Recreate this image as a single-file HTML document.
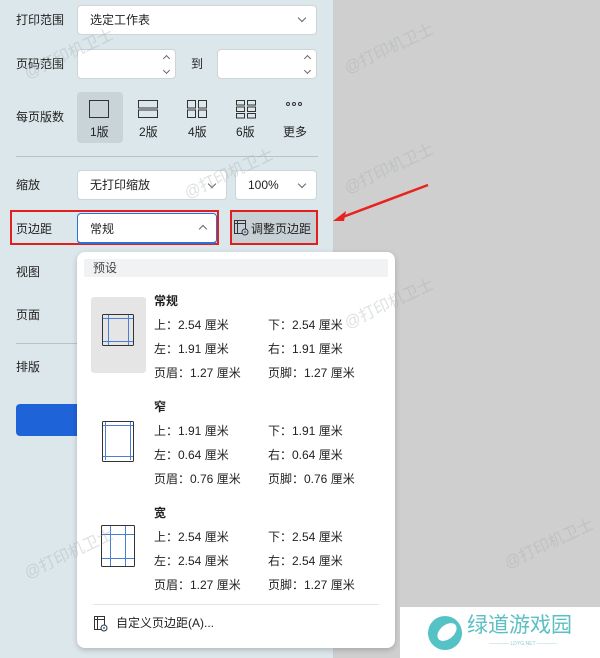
<!DOCTYPE html>
<html><head><meta charset="utf-8"><style>
*{margin:0;padding:0;box-sizing:border-box}
html,body{width:600px;height:658px;overflow:hidden}
body{position:relative;background:#cfcfcf;font-family:"Liberation Sans","Noto Sans CJK SC",sans-serif;font-size:12px;color:#222}
.a{position:absolute}
#panel{left:0;top:0;width:334px;height:658px;background:#dce7eb;border-right:1px solid #c6cfd3}
.box{position:absolute;background:#fff;border:1px solid #cdd5d9;border-radius:4px}
.lbl{position:absolute;font-size:12px;line-height:14px;white-space:nowrap}
.chev{position:absolute;width:6px;height:6px;border-right:1px solid #666;border-bottom:1px solid #666;transform:rotate(45deg)}
.up{transform:rotate(-135deg)}
.sm{width:5px;height:5px}
.dd{left:77px;top:252px;width:318px;height:396px;background:#fff;border-radius:8px;box-shadow:0 2px 6px rgba(0,0,0,.2)}
.t{font-size:12px;line-height:14px;position:absolute;white-space:nowrap;color:#222}
.b{font-weight:bold}
.wm{position:absolute;color:rgba(160,170,175,.35);font-size:16px;transform:rotate(-25deg);white-space:nowrap}
</style></head><body>
<div id="panel" class="a"></div>

<div class="lbl" style="left:16px;top:13px">打印范围</div>
<div class="box" style="left:77px;top:5px;width:240px;height:30px"></div>
<div class="lbl" style="left:90px;top:13px">选定工作表</div>
<div class="chev" style="left:299px;top:15px"></div>

<div class="lbl" style="left:16px;top:57px">页码范围</div>
<div class="box" style="left:77px;top:49px;width:99px;height:30px"></div>
<div class="chev up sm" style="left:164px;top:56px"></div>
<div class="chev sm" style="left:164px;top:68px"></div>
<div class="lbl" style="left:191px;top:57px">到</div>
<div class="box" style="left:217px;top:49px;width:100px;height:30px"></div>
<div class="chev up sm" style="left:305px;top:56px"></div>
<div class="chev sm" style="left:305px;top:68px"></div>

<div class="lbl" style="left:16px;top:110px">每页版数</div>
<div class="a" style="left:77px;top:92px;width:46px;height:51px;background:#c9d4d9;border-radius:4px"></div>
<svg class="a" style="left:77px;top:92px" width="250" height="30" fill="none" stroke="#333" stroke-width="1">
<rect x="12.5" y="8.5" width="19" height="17"/>
<rect x="61.5" y="8.5" width="19" height="7.5"/><rect x="61.5" y="18" width="19" height="7.5"/>
<rect x="110.5" y="8.5" width="8" height="7.5"/><rect x="121.5" y="8.5" width="8" height="7.5"/><rect x="110.5" y="18" width="8" height="7.5"/><rect x="121.5" y="18" width="8" height="7.5"/>
<rect x="159.5" y="8.5" width="8" height="4.5"/><rect x="170.5" y="8.5" width="8" height="4.5"/><rect x="159.5" y="15" width="8" height="4.5"/><rect x="170.5" y="15" width="8" height="4.5"/><rect x="159.5" y="21.5" width="8" height="4.5"/><rect x="170.5" y="21.5" width="8" height="4.5"/>
<circle cx="211" cy="12" r="1.5"/><circle cx="217" cy="12" r="1.5"/><circle cx="223" cy="12" r="1.5"/>
</svg>
<div class="lbl" style="left:90px;top:125px">1版</div>
<div class="lbl" style="left:139px;top:125px">2版</div>
<div class="lbl" style="left:188px;top:125px">4版</div>
<div class="lbl" style="left:236px;top:125px">6版</div>
<div class="lbl" style="left:283px;top:125px">更多</div>

<div class="a" style="left:16px;top:156px;width:302px;height:1px;background:#b9c3c7"></div>

<div class="lbl" style="left:16px;top:178px">缩放</div>
<div class="box" style="left:77px;top:170px;width:150px;height:30px"></div>
<div class="lbl" style="left:90px;top:178px">无打印缩放</div>
<div class="chev" style="left:209px;top:181px"></div>
<div class="box" style="left:235px;top:170px;width:82px;height:30px"></div>
<div class="lbl" style="left:248px;top:178px">100%</div>
<div class="chev" style="left:299px;top:181px"></div>

<div class="a" style="left:10px;top:210px;width:209px;height:35px;border:2px solid #e0201c"></div>
<div class="lbl" style="left:16px;top:222px">页边距</div>
<div class="box" style="left:77px;top:213px;width:140px;height:31px;border-color:#2f6fd8;border-bottom-width:2px"></div>
<div class="lbl" style="left:90px;top:222px">常规</div>
<div class="chev up" style="left:200px;top:226px"></div>
<div class="a" style="left:230px;top:210px;width:88px;height:35px;background:#c7d0d4;border:2px solid #e0201c"></div>
<svg class="a" style="left:233px;top:219px" width="18" height="18" fill="none" stroke="#333" stroke-width="1"><rect x="1.5" y="1.5" width="11" height="13"/><path d="M4.5 1.5v13M1.5 4.5h11"/><circle cx="12" cy="13" r="3" fill="#c7d0d4"/><circle cx="12" cy="13" r="1" fill="#2f6fd8" stroke="none"/></svg>
<div class="lbl" style="left:251px;top:222px">调整页边距</div>

<svg class="a" style="left:330px;top:180px" width="105" height="50"><path d="M98 5 L10 38" stroke="#e8221c" stroke-width="2.5"/><path d="M3 41 L16 31 L14 41 Z" fill="#e8221c"/></svg>

<div class="lbl" style="left:16px;top:265px">视图</div>
<div class="lbl" style="left:16px;top:308px">页面</div>
<div class="a" style="left:16px;top:343px;width:62px;height:1px;background:#b9c3c7"></div>
<div class="lbl" style="left:16px;top:360px">排版</div>
<div class="a" style="left:16px;top:404px;width:70px;height:32px;background:#1f63d8;border-radius:4px"></div>

<div class="a dd"></div>
<div class="a" style="left:84px;top:259px;width:304px;height:18px;background:#f0f2f4"></div>
<div class="t" style="left:93px;top:261px;color:#444">预设</div>

<div class="a" style="left:91px;top:297px;width:55px;height:76px;background:#e5e5e5;border-radius:3px"></div>
<svg class="a" style="left:100px;top:312px" width="240" height="260" fill="none" stroke-width="1">
<g stroke="#4a7fd6"><path d="M3 6.5h30M3 29.5h30M8.5 2v31M28.5 2v31"/></g>
<rect x="2.5" y="2.5" width="31" height="31" rx="1" stroke="#333"/>
<g transform="translate(0,108)"><g stroke="#4a7fd6"><path d="M3 5.5h30M3 36.5h30M5.5 2v38M30.5 2v38"/></g><rect x="2.5" y="1.5" width="31" height="40" rx="1" stroke="#333"/></g>
<g transform="translate(0,213)"><g stroke="#4a7fd6"><path d="M2 9.5h32M2 33.5h32M10.5 1v41M25.5 1v41"/></g><rect x="1.5" y="0.5" width="33" height="41" rx="1" stroke="#333"/></g>
</svg>

<div class="t b" style="left:154px;top:294px">常规</div>
<div class="t" style="left:154px;top:318px">上：2.54 厘米</div><div class="t" style="left:268px;top:318px">下：2.54 厘米</div>
<div class="t" style="left:154px;top:342px">左：1.91 厘米</div><div class="t" style="left:268px;top:342px">右：1.91 厘米</div>
<div class="t" style="left:154px;top:366px">页眉：1.27 厘米</div><div class="t" style="left:268px;top:366px">页脚：1.27 厘米</div>

<div class="t b" style="left:154px;top:400px">窄</div>
<div class="t" style="left:154px;top:424px">上：1.91 厘米</div><div class="t" style="left:268px;top:424px">下：1.91 厘米</div>
<div class="t" style="left:154px;top:448px">左：0.64 厘米</div><div class="t" style="left:268px;top:448px">右：0.64 厘米</div>
<div class="t" style="left:154px;top:472px">页眉：0.76 厘米</div><div class="t" style="left:268px;top:472px">页脚：0.76 厘米</div>

<div class="t b" style="left:154px;top:506px">宽</div>
<div class="t" style="left:154px;top:530px">上：2.54 厘米</div><div class="t" style="left:268px;top:530px">下：2.54 厘米</div>
<div class="t" style="left:154px;top:554px">左：2.54 厘米</div><div class="t" style="left:268px;top:554px">右：2.54 厘米</div>
<div class="t" style="left:154px;top:578px">页眉：1.27 厘米</div><div class="t" style="left:268px;top:578px">页脚：1.27 厘米</div>

<div class="a" style="left:93px;top:604px;width:286px;height:1px;background:#e2e2e2"></div>
<svg class="a" style="left:93px;top:615px" width="18" height="18" fill="none" stroke="#333" stroke-width="1"><rect x="1.5" y="1.5" width="10" height="13"/><path d="M4.5 1.5v13M1.5 4.5h10"/><circle cx="11" cy="13" r="3" fill="#fff"/><circle cx="11" cy="13" r="1" fill="#2f6fd8" stroke="none"/></svg>
<div class="t" style="left:116px;top:616px">自定义页边距(A)...</div>

<div class="a" style="left:400px;top:607px;width:200px;height:51px;background:#fff"></div>
<svg class="a" style="left:425px;top:613px" width="40" height="40"><circle cx="20" cy="20" r="17" fill="#55c2c6"/><ellipse cx="22" cy="19" rx="11" ry="7" transform="rotate(-40 22 19)" fill="#fff"/></svg>
<div class="a" style="left:467px;top:614px;font-size:21px;line-height:24px;color:#5bbfc4;white-space:nowrap">绿道游戏园</div>
<div class="a" style="left:468px;top:640px;width:110px;height:8px;font-size:5px;line-height:8px;color:#8fcfd2;text-align:center;white-space:nowrap">———— LDYG.NET ————</div>

<div class="wm" style="left:20px;top:40px">@打印机卫士</div>
<div class="wm" style="left:180px;top:160px">@打印机卫士</div>
<div class="wm" style="left:340px;top:35px">@打印机卫士</div>
<div class="wm" style="left:340px;top:155px">@打印机卫士</div>
<div class="wm" style="left:340px;top:290px">@打印机卫士</div>
<div class="wm" style="left:20px;top:540px">@打印机卫士</div>
<div class="wm" style="left:500px;top:530px">@打印机卫士</div>
</body></html>
